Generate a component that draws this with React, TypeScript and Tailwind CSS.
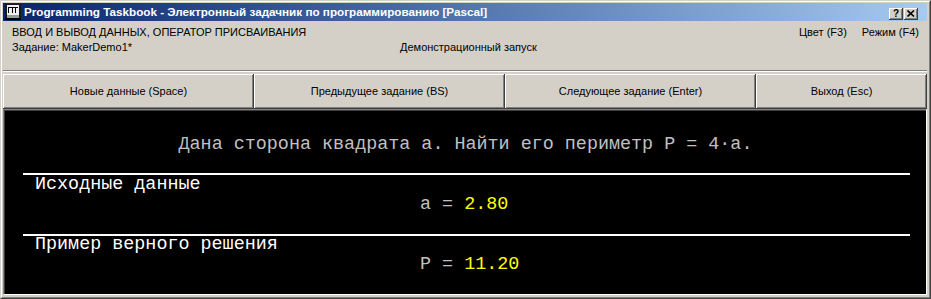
/**
 * Programming Taskbook demo window (classic Windows look).
 */

// =============================================================================
// PIECES
// =============================================================================

const bevel =
  'shadow-[inset_-1px_-1px_0_#404040,inset_1px_1px_0_#ffffff,inset_-2px_-2px_0_#808080]';

function AppIcon() {
  return (
    <svg width="16" height="16" viewBox="0 0 16 16" className="shrink-0">
      <rect x="0" y="0" width="16" height="16" fill="#1a1a1a" />
      <rect x="2" y="1" width="12" height="10" fill="#f0f0f0" />
      {/* П */}
      <rect x="3" y="3" width="5" height="1" fill="#000" />
      <rect x="3" y="3" width="1" height="6" fill="#000" />
      <rect x="7" y="3" width="1" height="6" fill="#000" />
      {/* Т */}
      <rect x="8" y="3" width="5" height="1" fill="#000" />
      <rect x="10" y="3" width="1" height="6" fill="#000" />
      <rect x="2" y="11" width="12" height="3" fill="#9a9a9a" />
      <rect x="0" y="14" width="16" height="2" fill="#000" />
    </svg>
  );
}

function CaptionButton({ children }: { children: React.ReactNode }) {
  return (
    <div
      className={`w-[14px] h-[12px] bg-[#d4d0c8] flex items-center justify-center ${bevel}`}
    >
      {children}
    </div>
  );
}

function ToolButton({ label, width }: { label: string; width: string }) {
  return (
    <div
      className={`${width} h-[35px] shrink-0 flex items-center justify-center text-[11px] text-black ${bevel}`}
    >
      {label}
    </div>
  );
}

// =============================================================================
// COMPONENT
// =============================================================================

export default function App() {
  return (
    <div className="w-[931px] h-[299px] bg-[#d4d0c8] border border-t-[#d4d0c8] border-l-[#d4d0c8] border-r-[#404040] border-b-[#404040] font-['Liberation_Sans',Arial,sans-serif]">
      <div className="h-full flex flex-col border border-t-white border-l-white border-r-[#808080] border-b-[#808080] pt-px pl-px pr-[2px] pb-[2px]">
        {/* Title bar */}
        <div className="h-[18px] shrink-0 flex items-center bg-linear-to-r from-[#0a246a] to-[#a6caf0] pl-[2px] pr-[9px]">
          <AppIcon />
          <span className="ml-[3px] text-white font-bold text-[11.7px] leading-none whitespace-nowrap">
            Programming Taskbook - Электронный задачник по программированию [Pascal]
          </span>
          <div className="ml-auto flex gap-[1px] mt-[3px]">
            <CaptionButton>
              <span className="text-[10px] font-bold leading-none text-black">?</span>
            </CaptionButton>
            <CaptionButton>
              <svg width="8" height="7" viewBox="0 0 8 7">
                <path d="M0.5 0.5 L7 6.5 M7 0.5 L0.5 6.5" stroke="#000" strokeWidth="1.6" />
              </svg>
            </CaptionButton>
          </div>
        </div>

        {/* Header */}
        <div className="h-[49px] shrink-0 pt-[4px] pl-[9px] pr-[8px] text-[11px] leading-[15px] text-black">
          <div className="flex">
            <span>ВВОД И ВЫВОД ДАННЫХ, ОПЕРАТОР ПРИСВАИВАНИЯ</span>
            <span className="ml-auto">Цвет (F3)</span>
            <span className="ml-[15px]">Режим (F4)</span>
          </div>
          <div className="flex">
            <span className="w-[388px]">Задание: MakerDemo1*</span>
            <span>Демонстрационный запуск</span>
          </div>
        </div>

        {/* Separator */}
        <div className="h-px shrink-0 bg-[#808080]" />
        <div className="h-px shrink-0 bg-white" />
        <div className="h-[2px] shrink-0" />

        {/* Buttons */}
        <div className="flex shrink-0">
          <ToolButton label="Новые данные (Space)" width="w-[251px]" />
          <ToolButton label="Предыдущее задание (BS)" width="w-[251px]" />
          <ToolButton label="Следующее задание (Enter)" width="w-[251px]" />
          <ToolButton label="Выход (Esc)" width="w-[171px]" />
        </div>

        {/* Task panel */}
        <div className="flex-1 flex flex-col border border-t-[#808080] border-l-[#808080] border-r-white border-b-white">
          <div className="flex-1 bg-black border-t border-l border-[#404040] border-r-0 border-b-0 font-['Liberation_Mono','Courier_New',monospace] text-[18.4px] leading-[20px] whitespace-pre">
            <div className="pt-[24px] text-center text-[#c0c0c0]">
              Дана сторона квадрата a. Найти его периметр P = 4·a.
            </div>

            <div className="mt-[18px] ml-[18px] mr-[16px] h-[2px] bg-white" />
            <div className="pl-[30px] text-white">Исходные данные</div>
            <div className="pl-[415px] text-[#c0c0c0]">
              a = <span className="text-[#ffff00]">2.80</span>
            </div>

            <div className="mt-[19px] ml-[18px] mr-[16px] h-[2px] bg-white" />
            <div className="pl-[30px] text-white -mt-[1px]">Пример верного решения</div>
            <div className="pl-[415px] text-[#c0c0c0]">
              P = <span className="text-[#ffff00]">11.20</span>
            </div>
          </div>
        </div>
      </div>
    </div>
  );
}
